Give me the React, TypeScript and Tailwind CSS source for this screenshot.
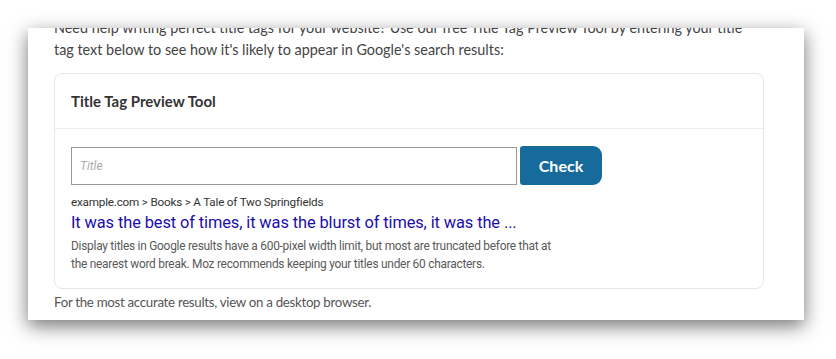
export default function App() {
  return (
    <div className="w-[836px] h-[359px] bg-white overflow-hidden pt-[28px] pl-[28px]">
      {/* Screenshot frame */}
      <div className="w-[776px] h-[292px] bg-white overflow-hidden shadow-[0_6px_18px_rgba(0,0,0,0.55)] pl-[26px]">
        <p
          className="-mt-[11px] w-[720px] whitespace-nowrap text-[14.4px] leading-[22px] text-[#444]"
          style={{ fontFamily: "Lato, 'Open Sans', sans-serif" }}
        >
          Need help writing perfect title tags for your website? Use our free Title Tag Preview Tool by entering your title
          <br />
          tag text below to see how it's likely to appear in Google's search results:
        </p>

        {/* Tool panel */}
        <div className="mt-[12px] w-[710px] h-[216px] border border-[#e6e6e6] rounded-lg">
          <div
            className="h-[55px] flex items-center px-[16px] border-b border-[#ececec] text-[15px] font-bold text-[#333]"
            style={{ fontFamily: "Lato, sans-serif" }}
          >
            Title Tag Preview Tool
          </div>

          <div className="px-[16px] pt-[17px]">
            <div className="flex items-center gap-[3px]">
              <input
                placeholder="Title"
                className="w-[446px] h-[38px] border border-[#9a9a9a] px-[8px] text-[12px] italic text-[#333] placeholder:text-[#aaa] outline-none"
                style={{ fontFamily: "Roboto, Arial, sans-serif" }}
              />
              <button
                className="w-[82px] h-[39px] bg-[#176a9c] text-white text-[16px] font-bold rounded-l-[3px] rounded-r-[9px]"
                style={{ fontFamily: "Lato, sans-serif" }}
              >
                Check
              </button>
            </div>

            <div className="whitespace-nowrap" style={{ fontFamily: "Roboto, Arial, sans-serif" }}>
              <p className="mt-[9px] text-[11.7px] leading-[16px] text-[#333] tracking-[-0.2px]">
                example.com &gt; Books &gt; A Tale of Two Springfields
              </p>
              <p className="mt-[2px] text-[16.4px] leading-[22px] text-[#1a0dab] tracking-[-0.1px]">
                It was the best of times, it was the blurst of times, it was the ...
              </p>
              <p className="mt-[3px] text-[11.9px] leading-[18px] text-[#5a5a5a] tracking-[-0.25px]">
                Display titles in Google results have a 600-pixel width limit, but most are truncated before that at
                <br />
                the nearest word break. Moz recommends keeping your titles under 60 characters.
              </p>
            </div>
          </div>
        </div>

        <p
          className="mt-[3px] whitespace-nowrap text-[13.3px] leading-[20px] text-[#555] tracking-[-0.3px]"
          style={{ fontFamily: "Lato, sans-serif" }}
        >
          For the most accurate results, view on a desktop browser.
        </p>
      </div>
    </div>
  );
}
